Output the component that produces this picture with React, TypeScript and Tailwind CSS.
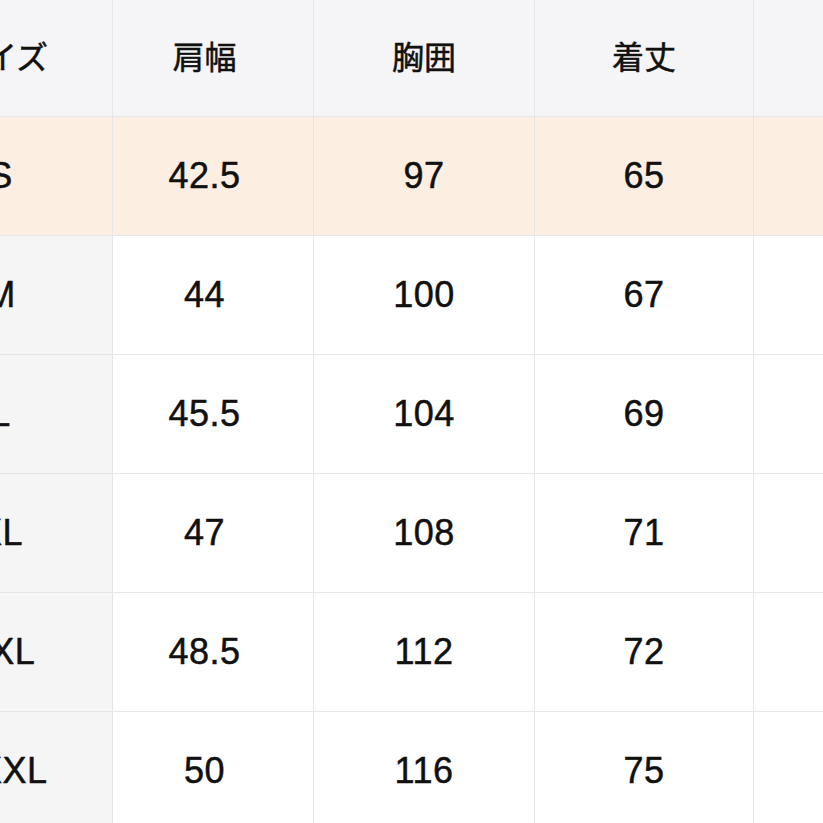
import React from 'react';

type Row = {
  size: string;
  shoulder: string;
  chest: string;
  length: string;
  highlight?: boolean;
};

const ROWS: Row[] = [
  { size: 'S', shoulder: '42.5', chest: '97', length: '65', highlight: true },
  { size: 'M', shoulder: '44', chest: '100', length: '67' },
  { size: 'L', shoulder: '45.5', chest: '104', length: '69' },
  { size: 'XL', shoulder: '47', chest: '108', length: '71' },
  { size: 'XXL', shoulder: '48.5', chest: '112', length: '72' },
  { size: 'XXXL', shoulder: '50', chest: '116', length: '75' },
];

const FONT = {
  fontFamily: '"Liberation Sans", "Noto Sans CJK JP", sans-serif',
};

const GRID = 'grid grid-cols-[224px_201px_221px_219px_220px]';

function Cell({
  children,
  className = '',
}: {
  children?: React.ReactNode;
  className?: string;
}) {
  return (
    <div
      className={`flex items-center justify-center border-r border-b border-[#e6e6e8] ${className}`}
    >
      {children}
    </div>
  );
}

export default function App() {
  return (
    <div
      className="h-[823px] w-[823px] overflow-hidden bg-white text-[#111] [-webkit-text-stroke:0.5px_#111]"
      style={FONT}
    >
      <div className="-ml-[111px] w-max">
        <div className={`${GRID} h-[117px] bg-[#f5f5f7] text-[32px]`}>
          <Cell>サイズ</Cell>
          <Cell className="pr-[17px]">肩幅</Cell>
          <Cell>胸囲</Cell>
          <Cell>着丈</Cell>
          <Cell />
        </div>

        {ROWS.map((row) => (
          <div
            key={row.size}
            className={`${GRID} h-[119px] text-[36px] tracking-[0.5px] ${row.highlight ? 'bg-[#fdeee2]' : 'bg-white'}`}
          >
            <Cell className={row.highlight ? '' : 'bg-[#f5f5f6]'}>{row.size}</Cell>
            <Cell className="pr-[17px]">{row.shoulder}</Cell>
            <Cell>{row.chest}</Cell>
            <Cell>{row.length}</Cell>
            <Cell />
          </div>
        ))}
      </div>
    </div>
  );
}
